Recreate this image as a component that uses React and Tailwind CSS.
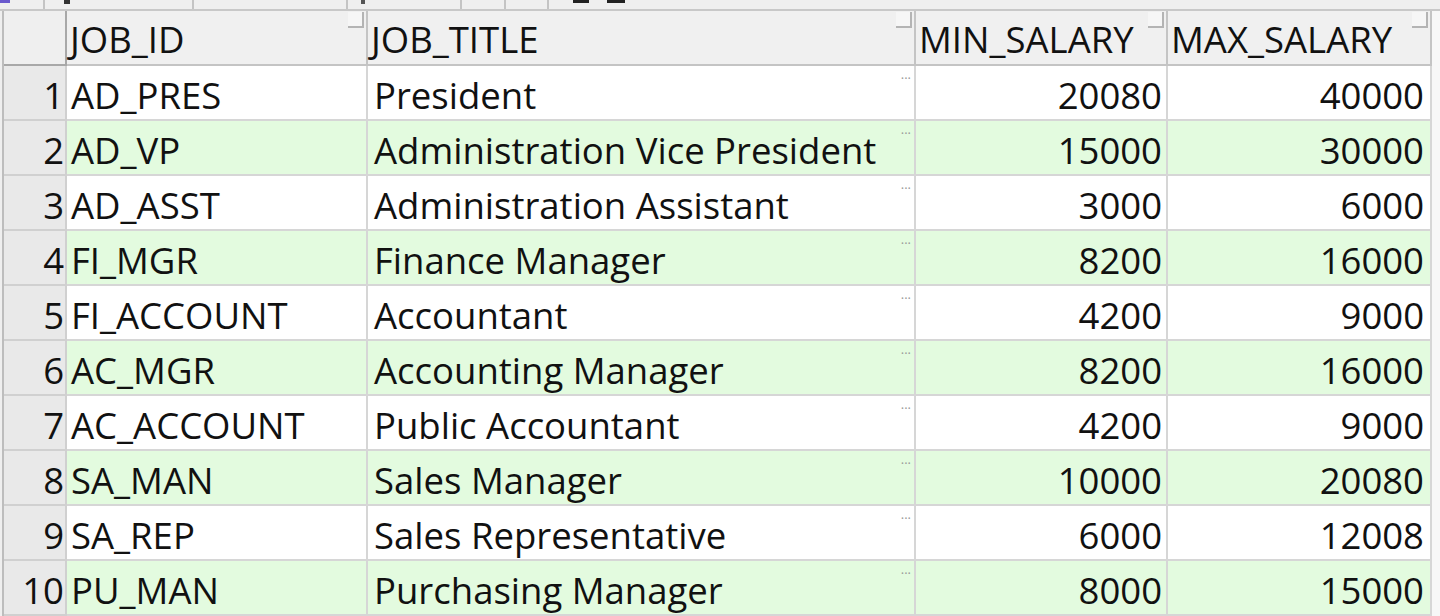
import React from "react";

const rows = [
  ["AD_PRES", "President", 20080, 40000],
  ["AD_VP", "Administration Vice President", 15000, 30000],
  ["AD_ASST", "Administration Assistant", 3000, 6000],
  ["FI_MGR", "Finance Manager", 8200, 16000],
  ["FI_ACCOUNT", "Accountant", 4200, 9000],
  ["AC_MGR", "Accounting Manager", 8200, 16000],
  ["AC_ACCOUNT", "Public Accountant", 4200, 9000],
  ["SA_MAN", "Sales Manager", 10000, 20080],
  ["SA_REP", "Sales Representative", 6000, 12008],
  ["PU_MAN", "Purchasing Manager", 8000, 15000],
];

// little sort box in the header corner
const Corner = () => (
  <div className="absolute top-[1px] right-[2px] w-[16px] h-[16px] border-b-2 border-r-2 border-[#b4b4b4] bg-[#f6f6f6]" />
);

const Toolbar = () => (
  <div className="h-[11px] bg-[#efefef] border-b-2 border-[#c8c8c8] flex items-start overflow-hidden">
    <div className="w-[10px] h-[3px] bg-[#6a5acd]" />
    <div className="w-[33px]" />
    <div className="w-[2px] h-[9px] bg-[#c4c4c4]" />
    <div className="w-[19px]" />
    <div className="w-[6px] h-[4px] bg-[#333]" />
    <div className="w-[122px]" />
    <div className="w-[2px] h-[9px] bg-[#c4c4c4]" />
    <div className="w-[152px]" />
    <div className="w-[2px] h-[9px] bg-[#c4c4c4]" />
    <div className="w-[13px]" />
    <div className="w-[4px] h-[4px] bg-[#555]" />
    <div className="w-[95px]" />
    <div className="w-[2px] h-[9px] bg-[#c4c4c4]" />
    <div className="w-[42px]" />
    <div className="w-[2px] h-[9px] bg-[#c4c4c4]" />
    <div className="w-[41px]" />
    <div className="w-[2px] h-[9px] bg-[#c4c4c4]" />
    <div className="w-[24px]" />
    <div className="w-[16px] h-[3px] bg-[#222]" />
    <div className="w-[18px]" />
    <div className="w-[18px] h-[3px] bg-[#222]" />
  </div>
);

export default function App() {
  const font = "font-['Open_Sans','Noto_Sans',sans-serif] text-[36.5px] text-[#111]";
  return (
    <div className={`w-[1440px] h-[616px] overflow-hidden bg-[#f7f7f7] ${font}`}>
      <Toolbar />
      <div className="grid grid-cols-[4px_63px_301px_548px_252px_264px_1fr]">
        {/* header */}
        <div className="h-[55px] bg-[#efefef] border-r-2 border-[#bdbdbd]" />
        <div className="h-[55px] bg-[#efefef] border-r-2 border-b-2 border-[#a8a8a8]" />
        {["JOB_ID", "JOB_TITLE", "MIN_SALARY", "MAX_SALARY"].map((h) => (
          <div
            key={h}
            className="relative h-[55px] bg-[#f0f0f0] border-r-2 border-b-2 border-[#c4c4c4] flex items-center pl-[3px] pt-[4px] leading-none whitespace-nowrap"
          >
            {h}
            <Corner />
          </div>
        ))}
        <div className="h-[55px] bg-[#f7f7f7]" />

        {rows.map((r, i) => {
          const bg = i % 2 === 1 ? "bg-[#e3fbdf]" : "bg-white";
          return (
            <React.Fragment key={r[0]}>
              <div className="h-[55px] bg-[#efefef] border-r-2 border-[#bdbdbd]" />
              <div className="h-[55px] bg-[#e9e9e9] border-r-2 border-b-2 border-[#d0d0d0] flex items-center justify-end pr-[1px] pt-[6px] leading-none">
                {i + 1}
              </div>
              <div className={`h-[55px] ${bg} border-r-2 border-b-2 border-[#d6d6d6] flex items-center pl-[4px] pt-[6px] leading-none whitespace-nowrap`}>
                {r[0]}
              </div>
              <div className={`relative h-[55px] ${bg} border-r-2 border-b-2 border-[#d6d6d6] flex items-center pl-[6px] pt-[6px] leading-none whitespace-nowrap`}>
                {r[1]}
                <span className="absolute top-[2px] right-[3px] text-[13px] leading-none text-[#9a9a9a]">
                  ...
                </span>
              </div>
              <div className={`h-[55px] ${bg} border-r-2 border-b-2 border-[#d6d6d6] flex items-center justify-end pr-[4px] pt-[6px] leading-none`}>
                {r[2]}
              </div>
              <div className={`h-[55px] ${bg} border-r-2 border-b-2 border-[#d6d6d6] flex items-center justify-end pr-[6px] pt-[6px] leading-none`}>
                {r[3]}
              </div>
              <div className="h-[55px] bg-[#f7f7f7]" />
            </React.Fragment>
          );
        })}
      </div>
    </div>
  );
}
